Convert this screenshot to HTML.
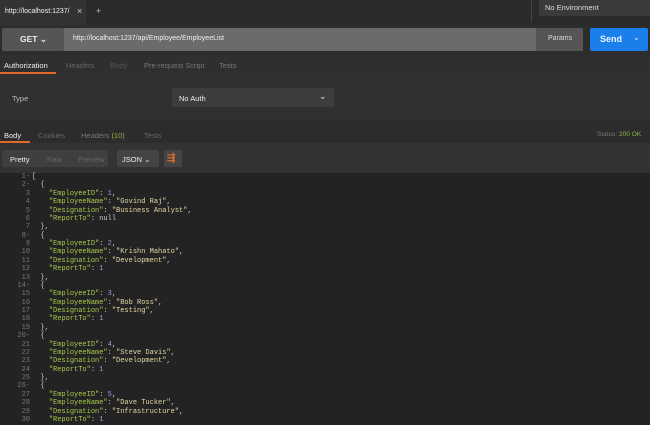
<!DOCTYPE html><html><head><style>
*{margin:0;padding:0;box-sizing:border-box}
body{width:650px;height:425px;background:#303030;font-family:"Liberation Sans",sans-serif;overflow:hidden;position:relative;color:#ddd}
.a{position:absolute}
.code{font-family:"Liberation Mono",monospace;font-size:7px;line-height:8.38px;white-space:pre}
.k{color:#a8c94a}.s{color:#e3d9a3}.n{color:#a597d8}.p{color:#ccc}
</style></head><body>
<div class="a" style="left:0;top:0;width:650px;height:25px;background:#2a2a2a"></div>
<div class="a" style="left:0;top:0;width:86px;height:25px;background:#333"></div>
<div class="a" style="left:5px;top:8px;font-size:7px;color:#eee">http://localhost:1237/</div>
<div class="a" style="left:77px;top:6px;font-size:9px;color:#ccc">×</div>
<div class="a" style="left:96px;top:6px;font-size:9px;color:#bbb">+</div>
<div class="a" style="left:531px;top:0;width:1px;height:22px;background:#444"></div>
<div class="a" style="left:539px;top:0;width:111px;height:16px;background:#3a3a3a"></div>
<div class="a" style="left:545px;top:3px;font-size:7.5px;color:#ddd">No Environment</div>
<div class="a" style="left:0;top:25px;width:650px;height:30px;background:#2d2d2d"></div>
<div class="a" style="left:2px;top:28px;width:62px;height:23px;background:#555;border-radius:2px"></div>
<div class="a" style="left:20px;top:34px;font-size:8.5px;font-weight:bold;color:#eee">GET ⌄</div>
<div class="a" style="left:64px;top:28px;width:476px;height:23px;background:#6b6b6b"></div>
<div class="a" style="left:73px;top:35px;font-size:7px;color:#f0f0f0">http://localhost:1237/api/Employee/EmployeeList</div>
<div class="a" style="left:536px;top:28px;width:47px;height:23px;background:#555"></div>
<div class="a" style="left:548px;top:35px;font-size:7px;color:#ddd">Params</div>
<div class="a" style="left:590px;top:28px;width:58px;height:23px;background:#1a7fea;border-radius:2px"></div>
<div class="a" style="left:600px;top:34px;font-size:9px;font-weight:bold;color:#e8f2ff">Send</div>
<div class="a" style="left:633px;top:33px;font-size:8px;color:#e8f2ff">⌄</div>
<div class="a" style="left:0;top:55px;width:650px;height:20px;background:#2f2f2f"></div>
<div class="a" style="left:4px;top:61px;font-size:7.5px;color:#eee">Authorization</div>
<div class="a" style="left:0;top:72px;width:56px;height:2px;background:#e0682b"></div>
<div class="a" style="left:66px;top:61px;font-size:7.5px;color:#666">Headers</div>
<div class="a" style="left:110px;top:61px;font-size:7.5px;color:#555">Body</div>
<div class="a" style="left:144px;top:61px;font-size:7.5px;color:#777">Pre-request Script</div>
<div class="a" style="left:219px;top:61px;font-size:7.5px;color:#777">Tests</div>
<div class="a" style="left:12px;top:94px;font-size:7.5px;color:#bbb">Type</div>
<div class="a" style="left:172px;top:88px;width:162px;height:19px;background:#3d3d3d;border-radius:2px"></div>
<div class="a" style="left:179px;top:94px;font-size:7.5px;color:#eee">No Auth</div>
<div class="a" style="left:319px;top:91px;font-size:9px;color:#ddd">⌄</div>
<div class="a" style="left:0;top:119px;width:650px;height:24px;background:#2c2c2c"></div>
<div class="a" style="left:4px;top:131px;font-size:7.5px;color:#eee">Body</div>
<div class="a" style="left:0;top:141px;width:30px;height:2px;background:#e0682b"></div>
<div class="a" style="left:38px;top:131px;font-size:7.5px;color:#666">Cookies</div>
<div class="a" style="left:81px;top:131px;font-size:7.5px;color:#777">Headers <span style="color:#8fb24a">(10)</span></div>
<div class="a" style="left:144px;top:131px;font-size:7.5px;color:#666">Tests</div>
<div class="a" style="left:597px;top:131px;font-size:6.5px;color:#777">Status: <span style="color:#8fb24a">200 OK</span></div>
<div class="a" style="left:0;top:143px;width:650px;height:30px;background:#333"></div>
<div class="a" style="left:2px;top:150px;width:106px;height:17px;background:#3f3f3f;border-radius:2px"></div>
<div class="a" style="left:10px;top:155px;font-size:7.5px;color:#eee">Pretty</div>
<div class="a" style="left:47px;top:155px;font-size:7.5px;color:#666">Raw</div>
<div class="a" style="left:78px;top:155px;font-size:7.5px;color:#666">Preview</div>
<div class="a" style="left:117px;top:150px;width:42px;height:17px;background:#444;border-radius:2px"></div>
<div class="a" style="left:122px;top:155px;font-size:7.5px;color:#eee">JSON ⌄</div>
<div class="a" style="left:164px;top:150px;width:18px;height:17px;background:#444;border-radius:2px"></div>
<div class="a" style="left:167px;top:153px;font-size:10px;color:#e0682b;font-weight:bold">⇶</div>
<div class="a" style="left:0;top:173px;width:650px;height:252px;background:#232323"></div>
<div class="a code" style="left:6px;top:173px;color:#777;text-align:right;width:24px">1-
2-
3
4
5
6
7
8-
9
10
11
12
13
14-
15
16
17
18
19
20-
21
22
23
24
25
26-
27
28
29
30</div>
<div class="a code p" style="left:32px;top:173px">[
  {
    <span class="k">"EmployeeID"</span>: <span class="n">1</span>,
    <span class="k">"EmployeeName"</span>: <span class="s">"Govind Raj"</span>,
    <span class="k">"Designation"</span>: <span class="s">"Business Analyst"</span>,
    <span class="k">"ReportTo"</span>: null
  },
  {
    <span class="k">"EmployeeID"</span>: <span class="n">2</span>,
    <span class="k">"EmployeeName"</span>: <span class="s">"Krishn Mahato"</span>,
    <span class="k">"Designation"</span>: <span class="s">"Development"</span>,
    <span class="k">"ReportTo"</span>: <span class="n">1</span>
  },
  {
    <span class="k">"EmployeeID"</span>: <span class="n">3</span>,
    <span class="k">"EmployeeName"</span>: <span class="s">"Bob Ross"</span>,
    <span class="k">"Designation"</span>: <span class="s">"Testing"</span>,
    <span class="k">"ReportTo"</span>: <span class="n">1</span>
  },
  {
    <span class="k">"EmployeeID"</span>: <span class="n">4</span>,
    <span class="k">"EmployeeName"</span>: <span class="s">"Steve Davis"</span>,
    <span class="k">"Designation"</span>: <span class="s">"Development"</span>,
    <span class="k">"ReportTo"</span>: <span class="n">1</span>
  },
  {
    <span class="k">"EmployeeID"</span>: <span class="n">5</span>,
    <span class="k">"EmployeeName"</span>: <span class="s">"Dave Tucker"</span>,
    <span class="k">"Designation"</span>: <span class="s">"Infrastructure"</span>,
    <span class="k">"ReportTo"</span>: <span class="n">1</span></div>
</body></html>
